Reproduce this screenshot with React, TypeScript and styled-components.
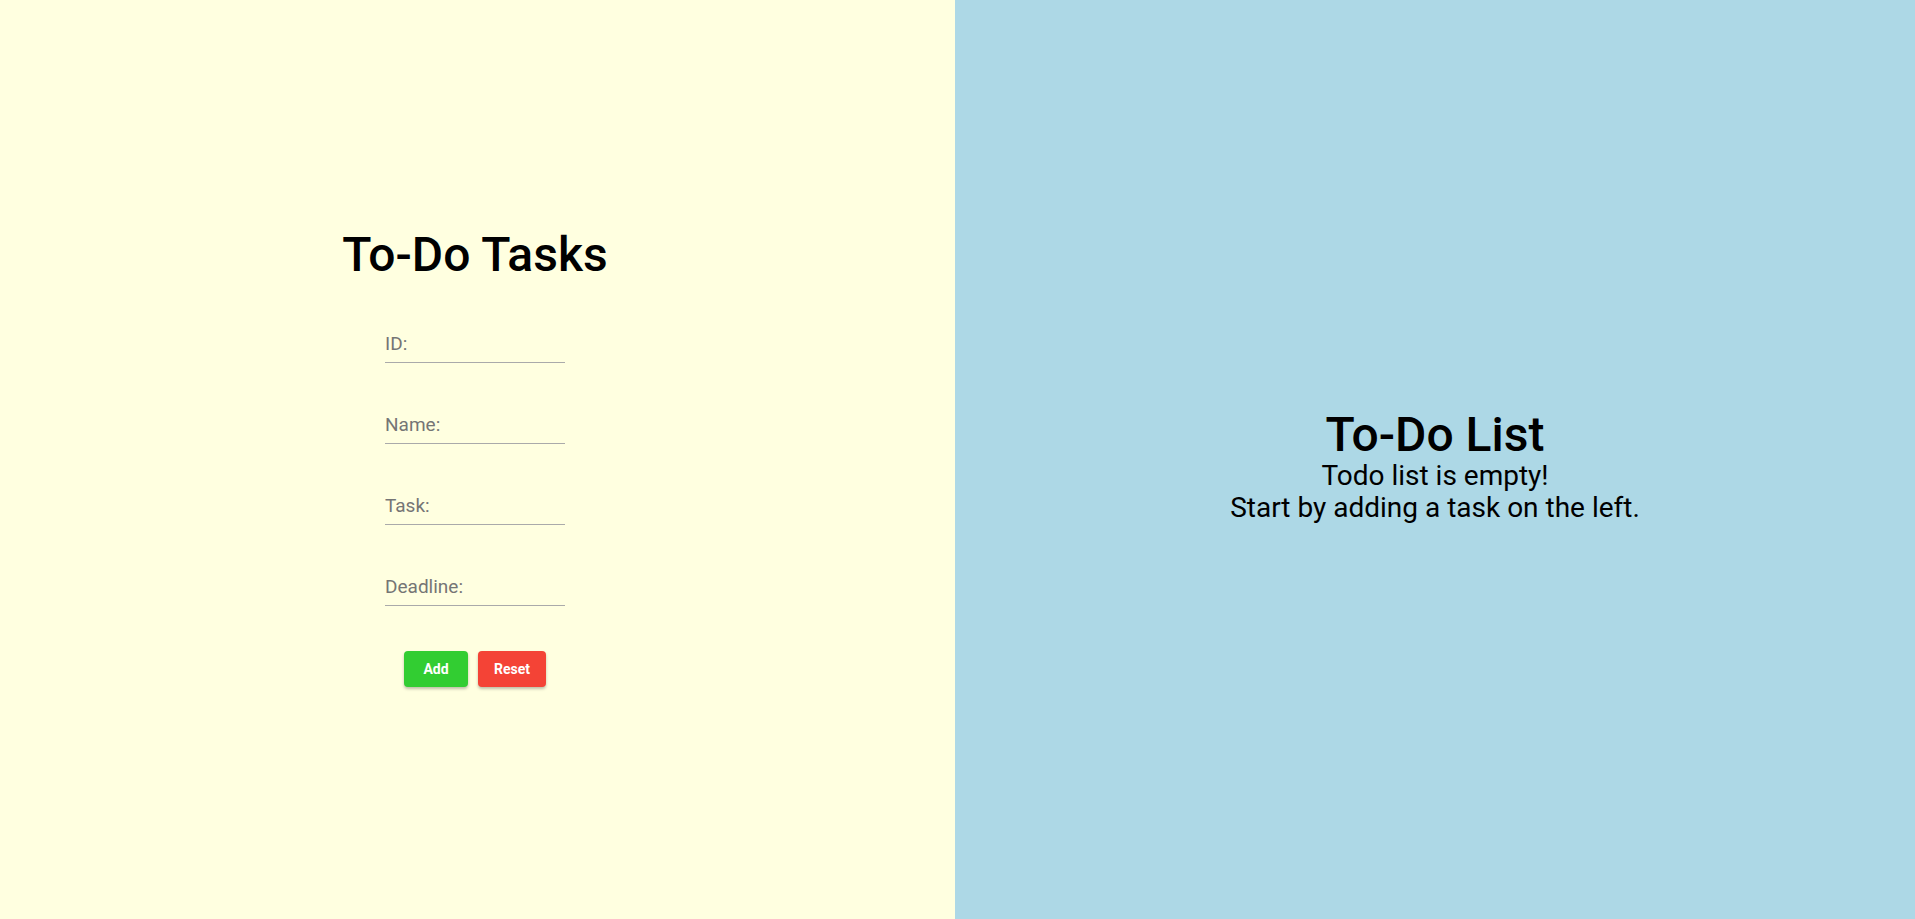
import React from "react";
import styled, { createGlobalStyle } from "styled-components";

const Global = createGlobalStyle`
  html, body { margin: 0; padding: 0; }
  body { font-family: Roboto, "Noto Sans", Arial, sans-serif; }
  #root { height: 100vh; }
`;

const Layout = styled.div`
  display: flex;
  height: 919px;
  width: 100%;
`;

const FormPanel = styled.section`
  width: 955px;
  flex: none;
  background: #ffffe0;
  display: flex;
  flex-direction: column;
  align-items: center;
  justify-content: center;
  padding: 0 5px 7px 0;
  box-sizing: border-box;
`;

const ListPanel = styled.section`
  flex: 1;
  background: #add8e6;
  display: flex;
  flex-direction: column;
  align-items: center;
  justify-content: center;
  padding-top: 14px;
  box-sizing: border-box;
`;

const Title = styled.h1<{ $tight?: boolean }>`
  margin: 0;
  font-size: 48px;
  font-weight: 500;
  color: #000;
  line-height: ${(p) => (p.$tight ? "50px" : "normal")};
`;

const Form = styled.form`
  display: flex;
  flex-direction: column;
  align-items: center;
  gap: 46px;
  margin-top: 45px;
`;

const Field = styled.input`
  width: 180px;
  box-sizing: border-box;
  border: none;
  border-bottom: 1px solid #aaaaaa;
  background: transparent;
  font-family: Roboto, Arial, sans-serif;
  font-size: 19px;
  padding: 4px 0 7px;
  outline: none;
  color: #333;
  &::placeholder { color: #757575; }
`;

const Buttons = styled.div`
  display: flex;
  gap: 10px;
  margin-top: -1px;
`;

const Button = styled.button<{ $color: string }>`
  min-width: 64px;
  height: 36px;
  padding: 6px 16px;
  border: none;
  border-radius: 4px;
  background: ${(p) => p.$color};
  color: #fff;
  font-family: Roboto, Arial, sans-serif;
  font-weight: 700;
  font-size: 14px;
  box-shadow: 0 2px 3px rgba(0, 0, 0, 0.25);
  cursor: pointer;
`;

const Message = styled.p`
  margin: 0;
  font-size: 28px;
  text-align: center;
  color: #000;
  line-height: 32px;
`;

export default function App() {
  return (
    <>
      <Global />
      <Layout>
        <FormPanel>
          <Title>To-Do Tasks</Title>
          <Form onSubmit={(e) => e.preventDefault()}>
            <Field placeholder="ID:" />
            <Field placeholder="Name:" />
            <Field placeholder="Task:" />
            <Field placeholder="Deadline:" />
            <Buttons>
              <Button type="submit" $color="#32cd32">Add</Button>
              <Button type="reset" $color="#f44336">Reset</Button>
            </Buttons>
          </Form>
        </FormPanel>
        <ListPanel>
          <Title $tight>To-Do List</Title>
          <Message>
            Todo list is empty!
            <br />
            Start by adding a task on the left.
          </Message>
        </ListPanel>
      </Layout>
    </>
  );
}
